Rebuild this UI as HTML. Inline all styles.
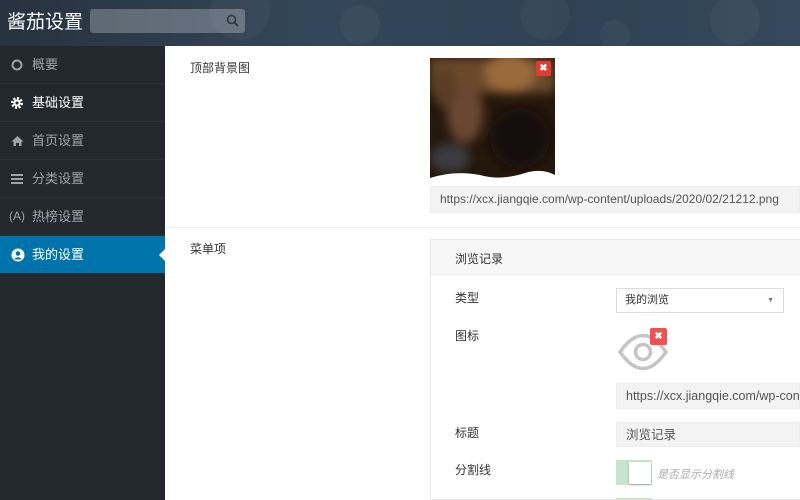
<!DOCTYPE html>
<html><head><meta charset="utf-8"><style>
*{margin:0;padding:0;box-sizing:border-box}
body{width:800px;height:500px;overflow:hidden;background:#fff;font-family:"Liberation Sans","Noto Sans CJK SC",sans-serif;position:relative}
.hdr{position:absolute;left:0;top:0;width:800px;height:46px;background:linear-gradient(90deg,#26323f,#34475a 40%,#2f4154 70%,#36495c);overflow:hidden}
.b{position:absolute;border-radius:50%;background:rgba(255,255,255,.035)}
.title{position:absolute;left:7px;top:9px;color:#fff;font-size:19px;line-height:28px}
.search{position:absolute;left:90px;top:9px;width:155px;height:24px;background:rgba(255,255,255,.25);border-radius:3px}
.side{position:absolute;left:0;top:46px;width:165px;height:454px;background:#23282d}
.it{height:38px;border-bottom:1px solid #2c3136;color:#9ea3a8;font-size:13px;line-height:37px;padding-left:32px;position:relative}
.it i{position:absolute;left:11px;top:0;font-style:normal;font-size:12px}
.act{background:#0073aa;color:#fff}
.act:after{content:"";position:absolute;right:0;top:13px;border:6px solid transparent;border-right-color:#fff;border-left:0}
.lbl{position:absolute;font-size:12px;color:#333}
.inp{position:absolute;background:#f3f3f3;border:1px solid #eee;font-size:12px;color:#555;line-height:25px;padding-left:9px;white-space:nowrap;overflow:hidden}
.x{position:absolute;background:#e53935;color:#fff;font-size:10px;font-weight:bold;text-align:center;border-radius:2px}
</style></head><body>
<div class="hdr">
<div class="b" style="left:210px;top:-20px;width:60px;height:60px"></div>
<div class="b" style="left:340px;top:5px;width:40px;height:40px"></div>
<div class="b" style="left:520px;top:-10px;width:50px;height:50px"></div>
<div class="b" style="left:600px;top:20px;width:30px;height:30px"></div>
<div class="b" style="left:710px;top:-5px;width:50px;height:50px"></div>
<div class="title">酱茄设置</div>
<div class="search"><svg width="14" height="14" style="position:absolute;right:5px;top:5px"><circle cx="5.5" cy="5.5" r="4" stroke="#333" stroke-width="1.6" fill="none"/><line x1="8.5" y1="8.5" x2="12" y2="12" stroke="#333" stroke-width="1.8"/></svg></div>
</div>
<div class="side">
<div class="it"><i><svg width="12" height="12" style="margin-top:13px"><circle cx="6" cy="6" r="4.5" fill="none" stroke="#9ea3a8" stroke-width="2"/></svg></i>概要</div>
<div class="it" style="color:#fff"><i><svg width="12" height="12" style="margin-top:13px"><circle cx="6" cy="6" r="4.5" fill="none" stroke="#fff" stroke-width="3" stroke-dasharray="2 1.5"/><circle cx="6" cy="6" r="3.5" fill="#fff"/><circle cx="6" cy="6" r="1.5" fill="#23282d"/></svg></i>基础设置</div>
<div class="it"><i><svg width="13" height="12" style="margin-top:13px"><path d="M6.5 1 L12.5 6.5 L10.5 6.5 L10.5 11 L8 11 L8 8 L5 8 L5 11 L2.5 11 L2.5 6.5 L0.5 6.5Z" fill="#9ea3a8"/></svg></i>首页设置</div>
<div class="it"><i><svg width="12" height="12" style="margin-top:13px"><rect y="1" width="12" height="2" fill="#9ea3a8"/><rect y="5" width="12" height="2" fill="#9ea3a8"/><rect y="9" width="12" height="2" fill="#9ea3a8"/></svg></i>分类设置</div>
<div class="it"><i style="left:9px">(A)</i>热榜设置</div>
<div class="it act"><i><svg width="14" height="14" style="margin-top:12px"><circle cx="7" cy="7" r="6.5" fill="#fff"/><circle cx="7" cy="5.5" r="2.3" fill="#0073aa"/><path d="M3 11.5 Q7 7 11 11.5" fill="#0073aa"/></svg></i>我的设置</div>
</div>
<div class="lbl" style="left:190px;top:59px">顶部背景图</div>
<svg width="125" height="125" style="position:absolute;left:430px;top:58px">
<defs><filter id="bl"><feGaussianBlur stdDeviation="5"/></filter><clipPath id="cp"><path d="M0 0H125V117Q112 110 95 115Q70 123 50 117Q25 112 0 120Z"/></clipPath></defs>
<g clip-path="url(#cp)"><rect width="125" height="125" fill="#24170c"/>
<g filter="url(#bl)"><rect x="0" y="0" width="125" height="35" fill="#6a4a2a"/><ellipse cx="80" cy="15" rx="25" ry="20" fill="#9a6a3a"/><ellipse cx="35" cy="55" rx="18" ry="30" fill="#6a4630"/><ellipse cx="15" cy="30" rx="12" ry="20" fill="#5a3e28"/><ellipse cx="20" cy="100" rx="20" ry="15" fill="#3a3a40"/><ellipse cx="90" cy="80" rx="30" ry="30" fill="#160f08"/></g></g></svg>
<div class="x" style="left:536px;top:61px;width:15px;height:15px;line-height:15px">✖</div>
<div class="inp" style="left:430px;top:186px;width:370px;height:27px">https://xcx.jiangqie.com/wp-content/uploads/2020/02/21212.png</div>
<div style="position:absolute;left:165px;top:227px;width:635px;height:1px;background:#eee"></div>
<div class="lbl" style="left:190px;top:240px">菜单项</div>
<div style="position:absolute;left:430px;top:239px;width:370px;height:261px;border:1px solid #e8e8e8;border-right:0"></div>
<div style="position:absolute;left:431px;top:240px;width:369px;height:35px;background:#f7f7f7;border-bottom:1px solid #eee"></div>
<div class="lbl" style="left:455px;top:250px">浏览记录</div>
<div class="lbl" style="left:455px;top:289px">类型</div>
<div style="position:absolute;left:616px;top:288px;width:168px;height:25px;border:1px solid #ddd;font-size:11px;color:#333;line-height:23px;padding-left:8px">我的浏览<span style="position:absolute;right:9px;font-size:7px;color:#777">▼</span></div>
<div class="lbl" style="left:455px;top:327px">图标</div>
<svg width="52" height="40" style="position:absolute;left:617px;top:333px"><path d="M3 19 Q26 -14 49 19 Q26 52 3 19Z" fill="none" stroke="#c4c4c4" stroke-width="3.5"/><circle cx="26" cy="19" r="7.5" fill="none" stroke="#c4c4c4" stroke-width="3.5"/></svg>
<div class="x" style="left:650px;top:328px;width:17px;height:17px;line-height:17px;background:#f05050">✖</div>
<div class="inp" style="left:616px;top:383px;width:184px;height:26px;font-size:12.5px">https://xcx.jiangqie.com/wp-content</div>
<div class="lbl" style="left:455px;top:424px">标题</div>
<div class="inp" style="left:616px;top:422px;width:184px;height:25px;font-size:12.5px">浏览记录</div>
<div class="lbl" style="left:455px;top:461px">分割线</div>
<div style="position:absolute;left:616px;top:460px;width:36px;height:25px;background:#c5e6cd"></div>
<div style="position:absolute;left:629px;top:462px;width:22px;height:22px;background:#fff;box-shadow:0 1px 2px rgba(0,0,0,.25)"></div>
<div style="position:absolute;left:657px;top:466px;font-size:11px;color:#aaa;font-style:italic">是否显示分割线</div>
<div style="position:absolute;left:616px;top:498px;width:36px;height:2px;background:#c5e6cd"></div>
</body></html>
